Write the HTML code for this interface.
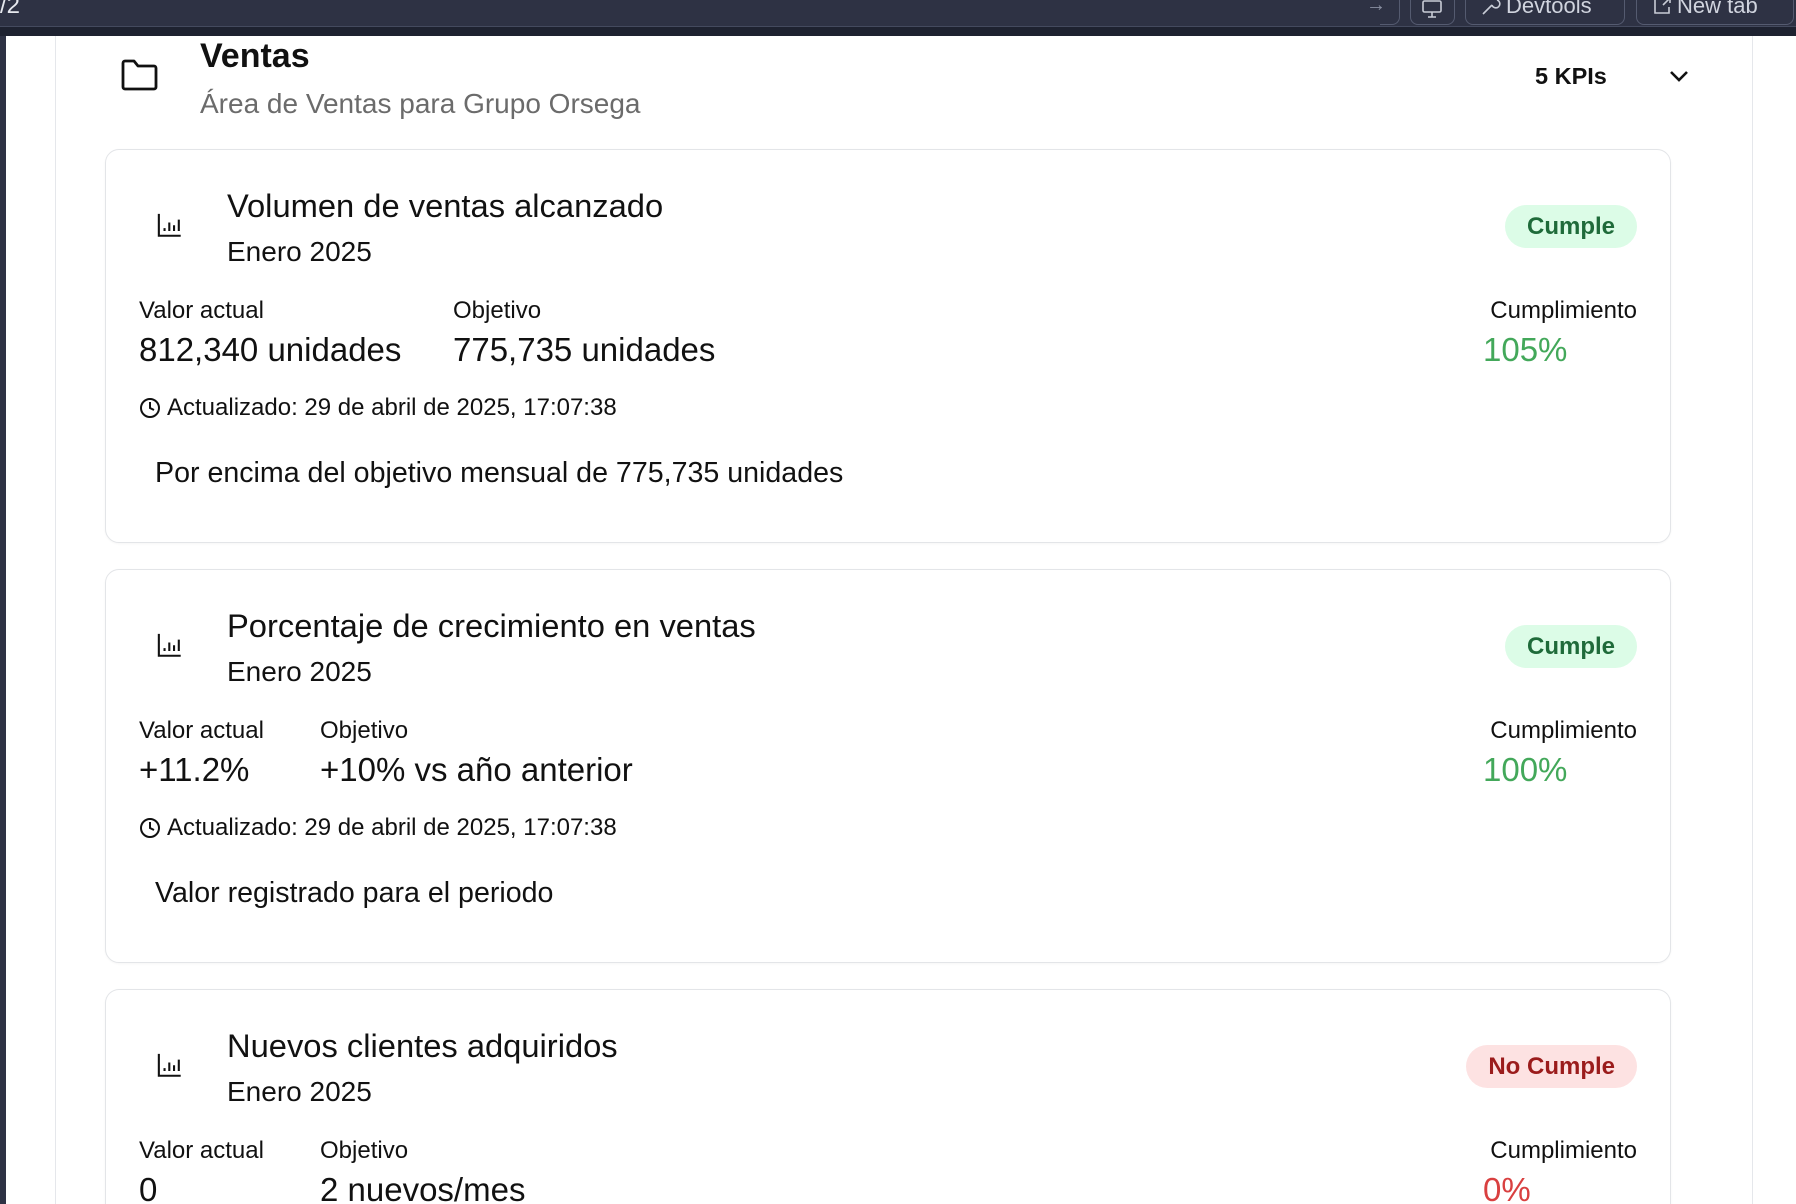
<!DOCTYPE html>
<html><head><meta charset="utf-8"><style>
*{margin:0;padding:0;box-sizing:border-box}
html,body{width:1796px;height:1204px;overflow:hidden}
body{background:#fff;font-family:"Liberation Sans",sans-serif;color:#111;position:relative}
#wrap{position:absolute;left:0;top:0;width:1796px;height:1204px;overflow:hidden}
.top{position:absolute;left:0;top:0;width:1796px;height:36px;background:#1e2230}
.topin{position:absolute;left:0;top:0;width:1796px;height:27px;background:#2e3244;border-bottom:1px solid #444a5e}
.tb{position:absolute;top:-10px;height:35px;border:1.5px solid #555b70;border-radius:8px;color:#d0d4de;font-size:22px;line-height:30px;padding:0 12px 0 40px;white-space:nowrap}
.side{position:absolute;left:0;top:36px;width:6px;height:1168px;background:#2e3244}
.panel{position:absolute;left:55px;top:36px;width:1698px;height:1168px;border-left:1px solid #e5e7eb;border-right:1px solid #e5e7eb;background:#fff}
.abs{position:absolute;white-space:nowrap}
.card{position:absolute;left:105px;width:1566px;height:394px;border:1.5px solid #e3e5e8;border-radius:14px;background:#fff;box-shadow:0 1px 2px rgba(0,0,0,.04)}
.t{font-size:32.7px;left:121px;top:37px}
.e{font-size:28px;left:121px;top:86px}
.badge{position:absolute;right:33px;top:55px;height:43px;border-radius:22px;font-weight:bold;font-size:24px;line-height:43px;padding:0 22px}
.ok{background:#dcfce7;color:#1f6b3a}
.no{background:#fde2e2;color:#9b1c1c}
.l{font-size:24px;top:147px}
.v{font-size:33px;top:181px}
.c{font-size:24px;left:61px;top:244px}
.d{font-size:28.6px;left:49px;top:307px}
.icon{position:absolute;left:50px;top:62px}
.clk{position:absolute;left:33px;top:247px}
</style></head><body><div id="wrap">
<div class="top"><div class="topin"></div>
<div class="abs" style="left:0;top:-8px;color:#e6e8ee;font-size:24px">/2</div>
<div class="abs" style="left:1366px;top:-6px;color:#8a90a2;font-size:20px">→</div>
<div style="position:absolute;left:1380px;top:-10px;width:20px;height:35px;border-right:1.5px solid #555b70;border-bottom:1.5px solid #555b70;border-radius:0 0 8px 0"></div>
<div class="tb" style="left:1410px;width:45px;padding:0">
<svg width="24" height="20" style="position:absolute;left:9px;top:9px" viewBox="0 0 24 20" fill="none" stroke="#c8ccd6" stroke-width="1.6"><rect x="3" y="1" width="18" height="11" rx="1.5"/><path d="M12 12v5M8 17h8"/></svg></div>
<div class="tb" style="left:1465px;width:160px">
<svg width="22" height="22" style="position:absolute;left:14px;top:4px" viewBox="0 0 22 22" fill="none" stroke="#c8ccd6" stroke-width="1.6"><path d="M3 19l9-9M12 10a4 4 0 1 0 5-5"/></svg>Devtools</div>
<div class="tb" style="left:1636px;width:158px">
<svg width="22" height="22" style="position:absolute;left:14px;top:4px" viewBox="0 0 22 22" fill="none" stroke="#c8ccd6" stroke-width="1.6"><path d="M10 4H4v14h14v-6M12 10l7-7M14 3h5v5"/></svg>New tab</div>
</div>
<div class="side"></div>
<div class="panel"></div>

<svg class="abs" style="left:121px;top:58px" width="38" height="34" viewBox="0 0 38 34" fill="none" stroke="#111" stroke-width="2.8" stroke-linejoin="round"><path d="M2 5a2 2 0 0 1 2-2h9l4 5h16a2 2 0 0 1 2 2v19a2 2 0 0 1-2 2H4a2 2 0 0 1-2-2z"/></svg>
<div class="abs" style="left:200px;top:37px;font-size:34px;font-weight:bold">Ventas</div>
<div class="abs" style="left:200px;top:88px;font-size:28px;color:#6b6b6b">Área de Ventas para Grupo Orsega</div>
<div class="abs" style="left:1535px;top:63px;font-size:23.5px;font-weight:bold">5 KPIs</div>
<svg class="abs" style="left:1668px;top:68px" width="22" height="16" viewBox="0 0 22 16" fill="none" stroke="#111" stroke-width="2.6"><path d="M3 4l8 8 8-8"/></svg>

<div class="card" style="top:149px">
<svg class="icon" width="28" height="28" viewBox="0 0 28 28" fill="none" stroke="#111" stroke-width="2.2"><path d="M3 2v23h23M9 20v-3M14 20v-9M19 20v-6M24 20v-12" transform="scale(.95)"/></svg>
<div class="abs t">Volumen de ventas alcanzado</div>
<div class="abs e">Enero 2025</div>
<div class="badge ok">Cumple</div>
<div class="abs l" style="left:33px">Valor actual</div>
<div class="abs v" style="left:33px">812,340 unidades</div>
<div class="abs l" style="left:347px">Objetivo</div>
<div class="abs v" style="left:347px">775,735 unidades</div>
<div class="abs l" style="right:33px">Cumplimiento</div>
<div class="abs v" style="left:1377px;color:#43a85a">105%</div>
<svg class="clk" width="22" height="22" viewBox="0 0 22 22" fill="none" stroke="#111" stroke-width="2"><circle cx="11" cy="11" r="9"/><path d="M11 5v6l4 2"/></svg>
<div class="abs c">Actualizado: 29 de abril de 2025, 17:07:38</div>
<div class="abs d">Por encima del objetivo mensual de 775,735 unidades</div>
</div>

<div class="card" style="top:569px">
<svg class="icon" width="28" height="28" viewBox="0 0 28 28" fill="none" stroke="#111" stroke-width="2.2"><path d="M3 2v23h23M9 20v-3M14 20v-9M19 20v-6M24 20v-12" transform="scale(.95)"/></svg>
<div class="abs t">Porcentaje de crecimiento en ventas</div>
<div class="abs e">Enero 2025</div>
<div class="badge ok">Cumple</div>
<div class="abs l" style="left:33px">Valor actual</div>
<div class="abs v" style="left:33px">+11.2%</div>
<div class="abs l" style="left:214px">Objetivo</div>
<div class="abs v" style="left:214px">+10% vs año anterior</div>
<div class="abs l" style="right:33px">Cumplimiento</div>
<div class="abs v" style="left:1377px;color:#43a85a">100%</div>
<svg class="clk" width="22" height="22" viewBox="0 0 22 22" fill="none" stroke="#111" stroke-width="2"><circle cx="11" cy="11" r="9"/><path d="M11 5v6l4 2"/></svg>
<div class="abs c">Actualizado: 29 de abril de 2025, 17:07:38</div>
<div class="abs d">Valor registrado para el periodo</div>
</div>

<div class="card" style="top:989px;height:215px;border-bottom:none;border-radius:14px 14px 0 0;overflow:hidden">
<svg class="icon" width="28" height="28" viewBox="0 0 28 28" fill="none" stroke="#111" stroke-width="2.2"><path d="M3 2v23h23M9 20v-3M14 20v-9M19 20v-6M24 20v-12" transform="scale(.95)"/></svg>
<div class="abs t">Nuevos clientes adquiridos</div>
<div class="abs e">Enero 2025</div>
<div class="badge no">No Cumple</div>
<div class="abs l" style="left:33px">Valor actual</div>
<div class="abs v" style="left:33px">0</div>
<div class="abs l" style="left:214px">Objetivo</div>
<div class="abs v" style="left:214px">2 nuevos/mes</div>
<div class="abs l" style="right:33px">Cumplimiento</div>
<div class="abs v" style="left:1377px;color:#d94040">0%</div>
</div>
</div></body></html>
